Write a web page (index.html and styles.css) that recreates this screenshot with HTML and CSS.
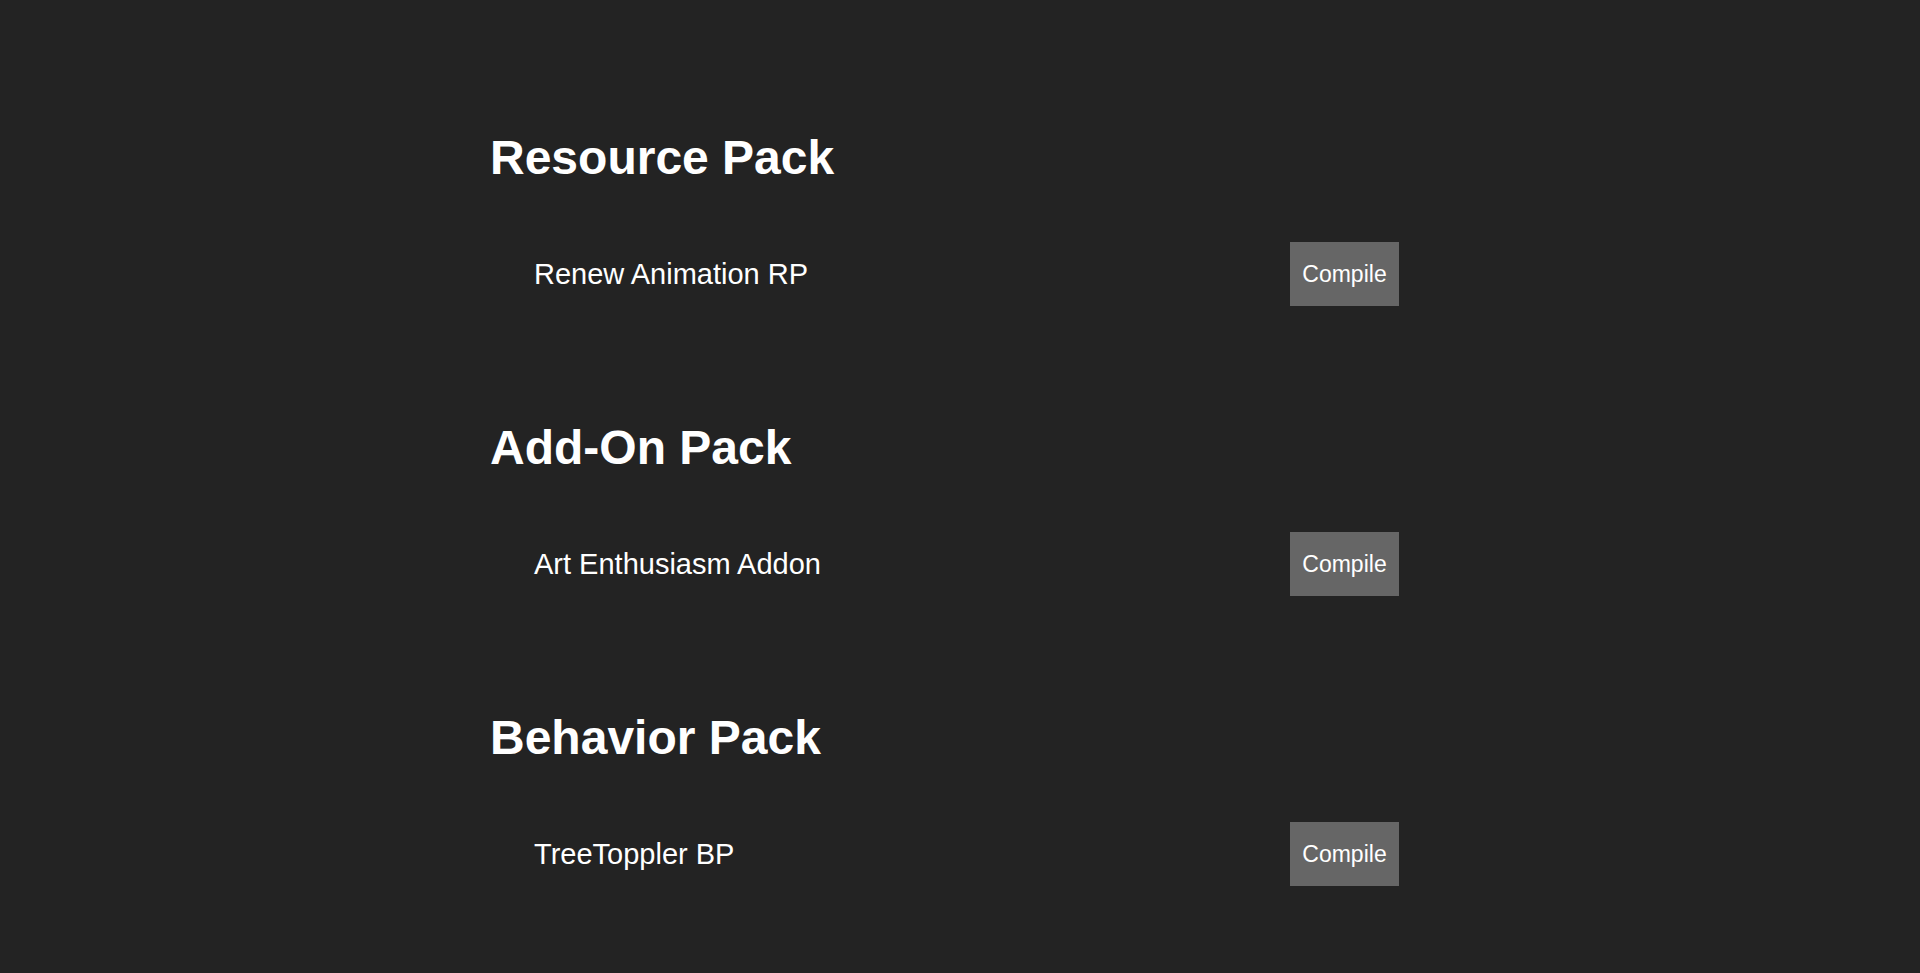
FILE: index.html
```html
<!DOCTYPE html>
<html lang="en">
<head>
<meta charset="utf-8">
<title>Packs</title>
<link rel="stylesheet" href="styles.css">
</head>
<body>
<main class="container">
  <section class="pack">
    <h2 class="pack-title">Resource Pack</h2>
    <div class="pack-item">
      <span class="pack-name">Renew Animation RP</span>
      <button class="compile-btn">Compile</button>
    </div>
  </section>
  <section class="pack">
    <h2 class="pack-title">Add-On Pack</h2>
    <div class="pack-item">
      <span class="pack-name">Art Enthusiasm Addon</span>
      <button class="compile-btn">Compile</button>
    </div>
  </section>
  <section class="pack">
    <h2 class="pack-title">Behavior Pack</h2>
    <div class="pack-item">
      <span class="pack-name">TreeToppler BP</span>
      <button class="compile-btn">Compile</button>
    </div>
  </section>
</main>
</body>
</html>
```

FILE: styles.css
```css
html, body {
  margin: 0;
  padding: 0;
  background: #232323;
  color: #ffffff;
  font-family: "Liberation Sans", Arial, sans-serif;
}

.container {
  width: 909px;
  margin-left: 490px;
  padding-top: 130px;
  display: flex;
  flex-direction: column;
  gap: 114px;
}

.pack {
  display: flex;
  flex-direction: column;
  gap: 57px;
}

.pack-title {
  margin: 0;
  font-size: 48px;
  line-height: 55px;
  font-weight: bold;
}

.pack-item {
  display: flex;
  align-items: center;
  justify-content: space-between;
  padding-left: 44px;
  height: 64px;
}

.pack-name {
  font-size: 29px;
  line-height: 33px;
}

.compile-btn {
  width: 109px;
  height: 64px;
  border: none;
  background: #666666;
  color: #ffffff;
  font-family: "Liberation Sans", Arial, sans-serif;
  font-size: 23px;
  padding: 0;
  cursor: pointer;
}
```
